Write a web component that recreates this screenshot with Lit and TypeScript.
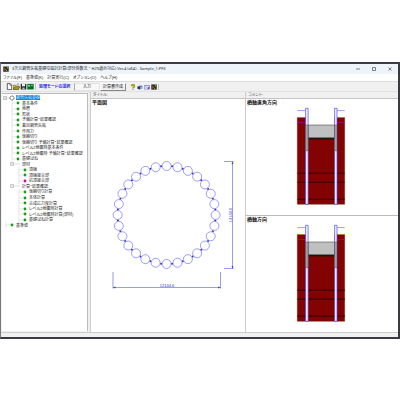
import { LitElement, html, css, svg } from "lit";
import { customElement, property } from "lit/decorators.js";
import { classMap } from "lit/directives/class-map.js";

interface TreeRow {
  label: string;
  level: number;
  kind?: "root" | "branch" | "alert";
}

const ROWS: TreeRow[] = [
  { label: "鋼管矢板基礎", level: 0, kind: "root" },
  { label: "基本条件", level: 1 },
  { label: "地層", level: 1 },
  { label: "形状", level: 1 },
  { label: "予備計算・結果確認", level: 1 },
  { label: "着目鋼管矢板", level: 1 },
  { label: "作用力", level: 1 },
  { label: "仮締切り", level: 1 },
  { label: "仮締切り 予備計算・結果確認", level: 1 },
  { label: "レベル2地震時基本条件", level: 1 },
  { label: "レベル2地震時 予備計算・結果確認", level: 1 },
  { label: "基礎ばね", level: 1 },
  { label: "部材", level: 1, kind: "branch" },
  { label: "頂版", level: 2 },
  { label: "頂版接合部", level: 2 },
  { label: "杭頂接合部", level: 2, kind: "alert" },
  { label: "計算・結果確認", level: 1, kind: "branch" },
  { label: "仮締切り計算", level: 2 },
  { label: "本体計算", level: 2 },
  { label: "合成応力度計算", level: 2 },
  { label: "レベル2地震時計算", level: 2 },
  { label: "レベル2地震時計算(部材)", level: 2 },
  { label: "基礎ばね計算", level: 2 },
  { label: "基準値", level: 0 },
];

const MENUS = ["ファイル(F)", "基準値(K)", "計算実行(C)", "オプション(O)", "ヘルプ(H)"];

const FILE_ICONS = [
  {
    name: "新規",
    art: svg`<path d="M1.500 .5h3l2 2v5h-5z" fill="#fff" stroke="#222" stroke-width=".8"/><path d="M4.500 .5v2h2" fill="none" stroke="#222" stroke-width=".6"/>`,
  },
  {
    name: "開く",
    art: svg`<path d="M.5 7.300v-5h2l.8 1h3v4z" fill="#e8d860" stroke="#55500a" stroke-width=".6"/><path d="M.5 7.300l1.500-3h5.800l-1.500 3z" fill="#a8a020" stroke="#44400a" stroke-width=".6"/><path d="M4.500 1.500q1.500-1.300 2.500 .5" fill="none" stroke="#333" stroke-width=".6"/>`,
  },
  {
    name: "保存",
    art: svg`<path d="M.8 1h6.400v6.400h-6.400z" fill="#202428"/><path d="M2.200 1h3.600v2.800h-3.600z" fill="#f0f0f0"/><path d="M2.600 5.200h2.800v2.200h-2.800z" fill="#b8b8b8"/>`,
  },
  {
    name: "読込",
    art: svg`<path d="M.3 1h7.400v6.400h-7.400z" fill="#0a7a34"/><path d="M1.200 2.200h2.200v1.800h-2.200zM4.600 2.600h2v.9h-2z" fill="#7be38f"/><path d="M1.500 5.300h2v1h-2zM4.600 4.800h2v1.600h-2z" fill="#063a18"/>`,
  },
];

const HELP_ICONS = [
  {
    name: "ヘルプ",
    art: svg`<path d="M2 3q0-2 2-2t2 1.800q0 1-1.200 1.600-.8.400-.8 1.100" fill="none" stroke="#6c6600" stroke-width="2"/><path d="M2 3q0-2 2-2t2 1.800q0 1-1.200 1.600-.8.400-.8 1.100" fill="none" stroke="#e6dc20" stroke-width=".9"/><circle cx="4" cy="7.100" r=".8" fill="#807800"/>`,
  },
  {
    name: "製品情報",
    art: svg`<circle cx="4.500" cy="4" r="2.500" fill="#3c62b0"/><path d="M.6 3l3.400 1v3.200l-3.400-1z" fill="#20305c"/><path d="M4 4l3.400-1v3.200l-3.400 1z" fill="#8fa8d8"/><path d="M3.500 1.500h2v1.200h-2z" fill="#b8d8f0"/>`,
  },
  {
    name: "メール",
    art: svg`<path d="M.3 2h7v4.800h-7z" fill="#fff" stroke="#36459c" stroke-width=".7"/><path d="M1.200 3.200h2M1.200 4.600h3" stroke="#7a86b8" stroke-width=".6"/><path d="M4.800 3l2.500 1.500v2.300h-2.500z" fill="#5060b0"/>`,
  },
  {
    name: "表示",
    art: svg`<path d="M.4 .6h7.200v6.900h-7.200z" fill="#222c16"/><path d="M.8 1l3 2.500-2 3.500z" fill="#b82c20"/><path d="M4.500 1.500l2.800-.5-.8 3z" fill="#4fae50"/><path d="M3.500 4.500l2 2.500" stroke="#e8d890" stroke-width=".8"/>`,
  },
];

@customElement("plan-view")
class PlanView extends LitElement {
  static styles = css`
    :host { display: block; min-height: 0; }
    .plan { display: block; width: 100%; height: 100%; }
    .line { fill: none; stroke: #5656f4; stroke-width: 0.6; }
    .pile { fill: #fff; stroke: #5c5cf6; stroke-width: 0.6; }
    .joint { fill: #3030c8; }
    .arrow { fill: #3c3cf0; }
    .figure { fill: #2c2ce0; font: 4px "Liberation Sans", sans-serif; text-anchor: middle; }
  `;

  render() {
    const count = 28;
    const radius = 49;
    const at = (i: number) => {
      const a = (i / count) * Math.PI * 2;
      return [75.6 + radius * Math.sin(a), 110 - radius * Math.cos(a)];
    };
    const slots = Array.from({ length: count }, (_, i) => i);
    return html`
      <svg class="plan" viewBox="0 0 154 225" preserveAspectRatio="xMidYMin meet" role="img" aria-label="平面図">
        ${slots.map((i) => {
          const [x, y] = at(i + 0.5);
          return svg`<circle class="joint" cx=${x} cy=${y} r="1"/>`;
        })}
        ${slots.map((i) => {
          const [x, y] = at(i);
          return svg`<circle class="pile" cx=${x} cy=${y} r="4.500"/>`;
        })}
        <path class="line" d="M133 56.500h9.500M133 163.500h9.500M141.500 56.500v107" />
        <path class="line" d="M22 167v16.500M129.500 167v16.500M22 182.500h107.500" />
        <path class="arrow" d="M141.500 56.500l1 2.500h-2zM141.500 163.500l1-2.500h-2zM22 182.500l2.500 1v-2zM129.500 182.500l-2.500 1v-2z" />
        <text class="figure" x="76" y="182">12144.6</text>
        <text class="figure" transform="translate(141 110) rotate(-90)">12144.6</text>
      </svg>
    `;
  }
}

@customElement("section-view")
class SectionView extends LitElement {
  @property() label = "";
  @property({ type: Boolean }) heavy = false;

  static styles = css`
    :host { display: block; min-height: 0; }
    .section { display: block; width: 100%; height: 100%; }
    .soil { fill: #830202; stroke: #5a2a10; stroke-width: 0.4; }
    .slab { fill: #c0c0c0; stroke: #333; stroke-width: 0.5; }
    .base { fill: #141a10; }
    .filled { fill: #a8a49c; stroke: #333; stroke-width: 0.4; }
    .pile { fill: #f4f4ff; stroke: #4a4af0; stroke-width: 0.7; }
    .water { stroke: #5a5aec; stroke-width: 0.6; }
    .ground { stroke: #c09010; stroke-width: 0.7; }
    .level { stroke: #b000a0; stroke-width: 0.7; }
    .layer { stroke: #240000; stroke-width: 0.8; }
    .heavy { stroke: #480000; stroke-width: 1.4; }
  `;

  render() {
    return html`
      <svg class="section" viewBox="0 0 152 106" preserveAspectRatio="xMidYMin meet" role="img" aria-label=${this.label}>
        <path class="soil" d="M51.300 12.500h47.400v86.800h-47.400z" />
        <path d="M62 2h26.500v19h-26.500z" fill="#fff" />
        <path class=${classMap({ layer: true, heavy: this.heavy })} d="M51.300 68.200h47.400M51.300 77.300h47.400M51.300 94.300h47.400" />
        <path class="slab" d="M62 20h26.600v13h-26.600z" />
        <path class="base" d="M62 32.700h26.600v1.700h-26.600z" />
        <path class="ground" d="M51.300 12.500h8M91 12.500h7.700" />
        <path class="level" d="M51.300 17.400h8M91 17.400h7.700" />
        <path class="water" d="M51.300 5.600h8M91 5.600h7.700" />
        <path class="pile" d="M59.600 3.300h2.500v96h-2.500zM88.600 3.300h2.400v96h-2.400z" />
        <path class="filled" d="M59.600 20h2.500v25.700h-2.500zM88.600 20h2.400v25.700h-2.400z" />
      </svg>
    `;
  }
}

@customElement("app-root")
class AppRoot extends LitElement {
  static styles = css`
    :host {
      box-sizing: border-box;
      display: flex;
      height: 100vh;
      padding: 62px 0 61px;
      background: #fff;
      color: #222;
      font: 4px/6px "Liberation Sans", "Noto Sans CJK JP", sans-serif;
      font-feature-settings: "palt";
    }
    .window {
      box-sizing: border-box;
      flex: 1;
      display: flex;
      flex-direction: column;
      min-width: 0;
      border: solid #3a3b40;
      border-width: 2px 2px 2px 1px;
      border-left-color: #77797c;
      background: #f0f0f0;
    }
    button {
      margin: 0;
      padding: 0;
      border: 0;
      background: none;
      color: inherit;
      font: inherit;
      font-feature-settings: inherit;
      white-space: nowrap;
    }
    .titlebar { display: flex; align-items: center; height: 10px; padding-left: 2px; background: #eff4fb; }
    .app-icon { width: 6px; height: 6px; }
    .title { flex: 1; margin: 0 0 0 3px; font: 400 4px/6px "Noto Sans", "Noto Sans CJK JP", sans-serif; white-space: nowrap; }
    .caption { display: grid; place-items: center; width: 16px; height: 10px; }
    .glyph { width: 4px; height: 4px; fill: none; stroke: #333; stroke-width: 0.6; }
    .menu { display: flex; gap: 4px; height: 7px; padding-left: 2px; background: #fff; border-bottom: 1px solid #ddd; }
    .toolbar { display: flex; align-items: center; height: 9px; padding-left: 5px; border-bottom: 1px solid #e2e2e2; }
    .icons { display: flex; gap: 1px; padding-right: 1px; margin-right: 2px; border-right: 1px solid #c4c4c4; }
    .help { padding-left: 4px; }
    .icon { display: block; width: 6px; height: 6px; }
    .files .icon { width: 7px; height: 7px; }
    .files { gap: 0; }
    .mode { width: 35px; padding-left: 1px; color: #2424ee; font-weight: 700; white-space: nowrap; }
    .input { width: 26px; height: 8px; background: #f7f7f7; border: 1px solid #e2e2e2; border-left-color: #aaa; }
    .report { width: 26px; height: 8px; border: 1px solid #fff; border-right-color: #888; border-bottom-color: #888; }
    .body { flex: 1; display: grid; grid-template-columns: 89fr 155fr 153fr; min-height: 0; }
    .side { display: flex; min-height: 0; min-width: 0; padding: 1px 2px 1px 1px; }
    .tree {
      flex: 1;
      background: #fff;
      border: solid #bbb;
      border-width: 1px 1px 0 0;
      overflow: hidden;
    }
    .rows { display: grid; grid-auto-rows: 1fr; height: 133px; margin: 0; padding: 1px 0 0 1px; list-style: none; }
    .row { display: flex; align-items: center; min-height: 0; white-space: nowrap; }
    .level-1 { padding-left: 6px; }
    .level-2 { padding-left: 13px; }
    .mark { flex: none; width: 12px; height: 6px; }
    .label { margin-left: 1px; line-height: 5px; }
    .selected { background: #0b7bd8; color: #d4eaff; }
    .pane { display: flex; flex-direction: column; min-width: 0; min-height: 0; border-left: 1px solid #ccc; }
    .pane-title { flex: none; height: 6px; padding-left: 2px; border-bottom: 1px solid #c4c4c4; color: #555; }
    .canvas { flex: 1; display: flex; flex-direction: column; min-height: 0; background: #fff; }
    .canvas + .canvas { border-top: 1px solid #bbb; }
    .heading { flex: none; margin: 0; padding-left: 1px; font-size: 5px; line-height: 6px; font-weight: 700; color: #111; }
    .drawing { flex: 1; }
    .status { height: 4px; border-top: 1px solid #ccc; }
  `;

  private mark(row: TreeRow) {
    if (row.kind === "root") {
      return svg`<path d="M3 3h4" stroke="#aaa" stroke-width=".5"/><path d="M.5 1.500h3v3h-3zM1 3h2" fill="#fff" stroke="#888" stroke-width=".5"/><circle cx="9" cy="3" r="2" fill="#fff" stroke="#222" stroke-width=".8" stroke-dasharray="1.200 .4"/>`;
    }
    if (row.kind === "branch") {
      return svg`<path d="M4 3h7" stroke="#bbb" stroke-width=".5"/><path d="M1.500 1.500h3v3h-3zM2 3h2" fill="#fff" stroke="#999" stroke-width=".5"/>`;
    }
    const fill = row.kind === "alert" ? "#c800c8" : "#12a012";
    return svg`<path d="M3 0v6M3 3h5" stroke="#ccc" stroke-width=".5"/><circle cx="9" cy="3" r="1.400" fill=${fill}/>`;
  }

  private iconButton(icon: { name: string; art: unknown }) {
    return html`<button aria-label=${icon.name}><svg class="icon" viewBox="0 0 8 8">${icon.art}</svg></button>`;
  }

  render() {
    return html`
      <div class="window">
        <header class="titlebar">
          <svg class="app-icon" viewBox="0 0 8 8" aria-hidden="true">
            <path d="M.4 .6h7.200v6.900h-7.200z" fill="#222c16" /><path d="M.8 1l3 2.500-2 3.500z" fill="#c02c20" />
            <path d="M4.500 1.500l2.800-.5-.8 3z" fill="#4fae50" /><path d="M3.500 4.500l2 2.500" stroke="#e8d890" />
          </svg>
          <h1 class="title">3次元鋼管矢板基礎の設計計算(部分係数法・H29道示対応) Ver.4 (x64) - Sample_1.PF3</h1>
          <button class="caption" aria-label="最小化"><svg class="glyph" viewBox="0 0 4 4"><path d="M0 2h4" /></svg></button>
          <button class="caption" aria-label="最大化"><svg class="glyph" viewBox="0 0 4 4"><path d="M.5 .5h3v3h-3z" /></svg></button>
          <button class="caption" aria-label="閉じる"><svg class="glyph" viewBox="0 0 4 4"><path d="M.5 .5l3 3M3.500 .5l-3 3" /></svg></button>
        </header>
        <nav class="menu">${MENUS.map((m) => html`<button>${m}</button>`)}</nav>
        <div class="toolbar">
          <div class="icons files">${FILE_ICONS.map((i) => this.iconButton(i))}</div>
          <span class="mode">処理モードの選択</span>
          <button class="input">入力</button>
          <button class="report">計算書作成</button>
          <div class="icons help">${HELP_ICONS.map((i) => this.iconButton(i))}</div>
        </div>
        <main class="body">
          <div class="side">
            <div class="tree">
              <ul class="rows">
                ${ROWS.map(
                  (row) => html`<li class=${classMap({ row: true, [`level-${row.level}`]: true })}>
                    <svg class="mark" viewBox="0 0 12 6" aria-hidden="true">${this.mark(row)}</svg>
                    <span class=${classMap({ label: true, selected: row.kind === "root" })}>${row.label}</span>
                  </li>`
                )}
              </ul>
            </div>
          </div>
          <section class="pane">
            <div class="pane-title">タイトル:</div>
            <div class="canvas">
              <h2 class="heading">平面図</h2>
              <plan-view class="drawing"></plan-view>
            </div>
          </section>
          <section class="pane">
            <div class="pane-title">コメント:</div>
            <div class="canvas">
              <h2 class="heading">橋軸直角方向</h2>
              <section-view class="drawing" label="橋軸直角方向"></section-view>
            </div>
            <div class="canvas">
              <h2 class="heading">橋軸方向</h2>
              <section-view class="drawing" label="橋軸方向" heavy></section-view>
            </div>
          </section>
        </main>
        <footer class="status"></footer>
      </div>
    `;
  }
}
